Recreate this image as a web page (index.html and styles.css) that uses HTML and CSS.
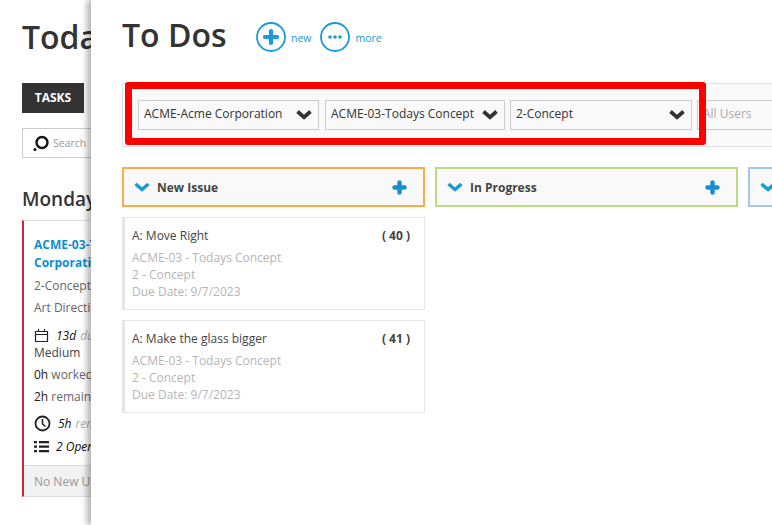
FILE: index.html
```html
<!DOCTYPE html>
<html lang="en">
<head>
<meta charset="utf-8">
<title>To Dos</title>
<link rel="stylesheet" href="styles.css">
</head>
<body>
<main class="back">
  <h1 class="back-title">Today's Tasks</h1>
  <div class="tab">TASKS</div>
  <div class="search">
    <svg class="search-icon" width="17" height="17" viewBox="0 0 17 17"><circle cx="9" cy="7.500" r="5.500" fill="none" stroke="#111" stroke-width="2.400"/><circle cx="2" cy="14.500" r="1.500" fill="#111"/></svg>
    <span>Search</span>
  </div>
  <h2 class="day">Monday</h2>
  <article class="task">
    <div class="task-body">
      <a class="task-link">ACME-03-Todays Concept-Acme Corporation</a>
      <p class="line first">2-Concept</p>
      <p class="line">Art Direction</p>
      <p class="due"><svg width="15" height="15" viewBox="0 0 15 15"><path d="M1.500 3.500h12v10h-12zM1.500 6.500h12M4.500 1v3M10.500 1v3" fill="none" stroke="#222" stroke-width="1.200"/></svg><i>13d</i> <i class="muted">due date</i></p>
      <p class="line tight">Medium</p>
      <p class="line"><b>0h</b> worked</p>
      <p class="line"><b>2h</b> remaining</p>
      <p class="rem"><svg width="17" height="17" viewBox="0 0 17 17"><circle cx="8.500" cy="8.500" r="7" fill="none" stroke="#222" stroke-width="1.800"/><path d="M8.500 4v5l3 2.500" fill="none" stroke="#222" stroke-width="1.600"/></svg><i>5h</i> <i class="muted">remaining</i></p>
      <p class="open"><svg width="15" height="13" viewBox="0 0 15 13"><path d="M0 1h3v2.200H0zM5 1h10v2.200H5zM0 5.500h3v2.200H0zM5 5.500h10v2.200H5zM0 10h3v2.200H0zM5 10h10v2.200H5z" fill="#222"/></svg><i>2 Open To Dos</i></p>
    </div>
    <div class="task-foot">No New Updates</div>
  </article>
</main>

<section class="drawer">
  <header class="head">
    <h1>To Dos</h1>
    <a class="action">
      <svg width="30" height="30" viewBox="0 0 30 30"><circle cx="15" cy="15" r="14" fill="#fff" stroke="#1a9ad6" stroke-width="1.800"/><path d="M15 9v12M9 15h12" stroke="#1a9ad6" stroke-width="4.200" stroke-linecap="round"/></svg>
      <span>new</span>
    </a>
    <a class="action">
      <svg width="30" height="30" viewBox="0 0 30 30"><circle cx="15" cy="15" r="14" fill="#fff" stroke="#1a9ad6" stroke-width="1.800"/><circle cx="10" cy="15" r="1.800" fill="#1a9ad6"/><circle cx="15" cy="15" r="1.800" fill="#1a9ad6"/><circle cx="20" cy="15" r="1.800" fill="#1a9ad6"/></svg>
      <span>more</span>
    </a>
  </header>

  <div class="filters">
    <div class="select s1"><span>ACME-Acme Corporation</span><svg class="chev" width="16" height="11" viewBox="0 0 16 11"><path d="M1.500 2.500L8 8.200l6.500-5.700" fill="none" stroke="#333" stroke-width="3.700"/></svg></div>
    <div class="select s2"><span>ACME-03-Todays Concept</span><svg class="chev" width="16" height="11" viewBox="0 0 16 11"><path d="M1.500 2.500L8 8.200l6.500-5.700" fill="none" stroke="#333" stroke-width="3.700"/></svg></div>
    <div class="select s3"><span>2-Concept</span><svg class="chev" width="16" height="11" viewBox="0 0 16 11"><path d="M1.500 2.500L8 8.200l6.500-5.700" fill="none" stroke="#333" stroke-width="3.700"/></svg></div>
    <div class="select users"><span>All Users</span></div>
    <div class="highlight"></div>
  </div>

  <div class="board">
    <div class="column">
      <div class="col-head orange">
        <svg width="16" height="10" viewBox="0 0 16 10"><path d="M1.500 2l6.500 5.500L14.500 2" fill="none" stroke="#1a9ad6" stroke-width="3.500"/></svg>
        <span class="col-name">New Issue</span>
        <svg class="plus" width="15" height="15" viewBox="0 0 15 15"><path d="M7.500 2.500v10M2.500 7.500h10" stroke="#1a8fd0" stroke-width="4.500" stroke-linecap="round"/></svg>
      </div>
      <div class="card">
        <div class="card-top"><span>A: Move Right</span><b>( 40 )</b></div>
        <p>ACME-03 - Todays Concept</p><p>2 - Concept</p><p>Due Date: 9/7/2023</p>
      </div>
      <div class="card">
        <div class="card-top"><span>A: Make the glass bigger</span><b>( 41 )</b></div>
        <p>ACME-03 - Todays Concept</p><p>2 - Concept</p><p>Due Date: 9/7/2023</p>
      </div>
    </div>
    <div class="column">
      <div class="col-head green">
        <svg width="16" height="10" viewBox="0 0 16 10"><path d="M1.500 2l6.500 5.500L14.500 2" fill="none" stroke="#1a9ad6" stroke-width="3.500"/></svg>
        <span class="col-name">In Progress</span>
        <svg class="plus" width="15" height="15" viewBox="0 0 15 15"><path d="M7.500 2.500v10M2.500 7.500h10" stroke="#1a8fd0" stroke-width="4.500" stroke-linecap="round"/></svg>
      </div>
    </div>
    <div class="column">
      <div class="col-head blue">
        <svg width="16" height="10" viewBox="0 0 16 10"><path d="M1.500 2l6.500 5.500L14.500 2" fill="none" stroke="#1a9ad6" stroke-width="3.500"/></svg>
      </div>
    </div>
  </div>
</section>
</body>
</html>
```
FILE: styles.css
```css
* { box-sizing: border-box; }
html, body { margin: 0; height: 100%; }
body {
  position: relative;
  width: 772px;
  height: 525px;
  overflow: hidden;
  background: #fff;
  font-family: "Open Sans", sans-serif;
  color: #333;
}
h1, h2, p { margin: 0; font-weight: inherit; }

.back { width: 400px; padding: 15px 0 0 22px; }
.back-title { font-size: 32px; line-height: 44px; font-weight: 600; color: #333; white-space: nowrap; }
.tab {
  width: 62px; height: 30px; margin-top: 24px;
  background: #333; color: #fff;
  font-size: 12px; font-weight: 700; line-height: 30px; text-align: center;
}
.search {
  display: flex; align-items: center; gap: 3px;
  width: 200px; height: 30px; margin-top: 15px; padding-left: 10px;
  border: 1px solid #ccc; font-size: 10.500px; color: #999;
}
.search-icon { flex: none; }
.day { margin-top: 26px; font-size: 19px; line-height: 30px; font-weight: 600; color: #333; }
.task {
  width: 300px; height: 277px; margin-top: 6px;
  border: 1px solid #ddd; border-left: 2px solid #c8283a;
  display: flex; flex-direction: column;
}
.task-body { flex: 1; padding: 15px 10px 0; font-size: 12px; color: #666; }
.task-link { display: block; width: 210px; color: #0a8fd3; font-weight: 700; line-height: 18px; }
.line { line-height: 18px; margin-top: 4px; white-space: nowrap; }
.line.first { margin-top: 5px; }
.line.tight { margin-top: 0; color: #444; }
.line b { font-weight: 400; color: #222; }
.due, .rem, .open { display: flex; align-items: center; gap: 6px; white-space: nowrap; color: #111; }
.due { margin-top: 9px; height: 18px; gap: 7px; }
.rem { margin-top: 7px; height: 20px; gap: 7px; }
.open { margin-top: 3px; height: 20px; gap: 7px; }
.muted { color: #aaa; margin-left: -3px; }
.task-foot {
  height: 31px; padding-left: 10px;
  background: #f2f2f2; border-top: 1px solid #ddd;
  font-size: 12px; line-height: 31px; color: #999;
}

.drawer {
  position: absolute; top: 0; left: 91px; bottom: 0; width: 681px;
  padding: 0 0 0 31px;
  background: #fff;
  box-shadow: -4px 0 6px rgba(0, 0, 0, .3);
  overflow: hidden;
}
.head { display: flex; align-items: center; height: 75px; padding-bottom: 1px; }
.head h1 { font-size: 32px; line-height: 44px; font-weight: 600; color: #333; width: 134px; white-space: nowrap; position: relative; top: -2px; }
.action { display: flex; align-items: center; gap: 5px; font-size: 10.500px; color: #1a9ad6; margin-right: 9px; }
.action span { padding-top: 2px; }

.filters {
  position: relative;
  display: flex; align-items: center; gap: 6px;
  height: 64px; margin-top: 8px; padding: 0 0 0 15px;
  width: 660px;
  background: #f9f9f9;
  border: 1px solid #e2e2e2;
}
.select {
  display: flex; align-items: center; justify-content: space-between;
  flex: none; height: 30px; padding: 0 6px 3px 5px;
  margin-top: -1px;
  background: #f9f9f9; border: 1px solid #ccc;
  font-size: 12px; color: #333; white-space: nowrap;
}
.chev { position: relative; top: 1px; }
.s1 { width: 181px; }
.s2 { width: 180px; }
.s3 { width: 182px; margin-left: -1px; }
.users { width: 90px; margin-left: -1px; color: #aaa; border-right: 0; }
.highlight {
  position: absolute; top: -2px; left: 2px;
  width: 581px; height: 63px;
  border: 7px solid #f00; border-radius: 3px;
}

.board { display: flex; gap: 10px; margin-top: 20px; width: 900px; }
.column { flex: none; width: 303px; }
.col-head {
  display: flex; align-items: center; gap: 6px;
  height: 40px; padding: 0 16px 0 10px;
  background: #f9f9f9; border: 2px solid;
}
.col-head > svg:first-child { margin-right: 1px; }
.orange { border-color: #fbad4e; }
.green { border-color: #b9dd7e; }
.blue { border-color: #a5c9e8; }
.col-name { flex: 1; font-size: 12px; font-weight: 700; color: #444; }
.plus { flex: none; }
.card {
  height: 93px; margin-top: 10px; padding: 8px 14px 0 7px;
  background: #fff;
  border: 1px solid #e6e6e6; border-left: 3px solid #e6e6e6;
  font-size: 12px; line-height: 17px; color: #b5b5b5;
}
.card-top {
  display: flex; justify-content: space-between;
  color: #444; line-height: 20px; margin-bottom: 3px;
}
.card-top b { font-weight: 700; color: #444; }
```
